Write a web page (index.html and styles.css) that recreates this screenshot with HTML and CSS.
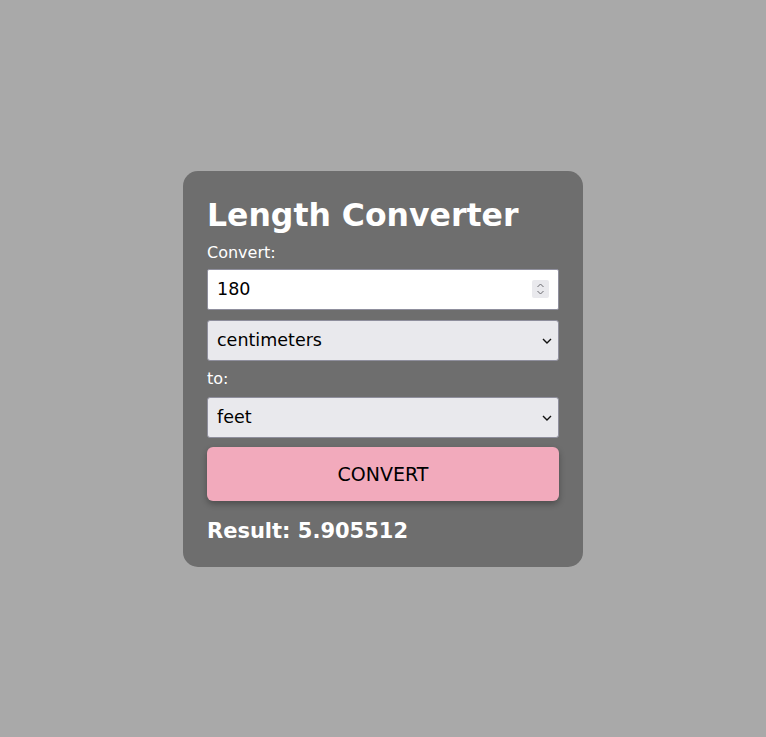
FILE: index.html
```html
<!DOCTYPE html>
<html>
<head>
<meta charset="utf-8">
<link rel="stylesheet" href="styles.css">
</head>
<body>
<div class="page">
  <div class="card">
    <h1 class="title">Length Converter</h1>
    <label class="label" for="val">Convert:</label>
    <div class="wrap wrap-input">
      <input class="field" id="val" type="number" value="180">
      <span class="spin">
        <svg width="17" height="18" viewBox="0 0 17 18"><path d="M5.5 7 L8.5 4 L11.5 7 M5.5 11 L8.5 14 L11.5 11" fill="none" stroke="#6a6a70" stroke-width="1"/></svg>
      </span>
    </div>
    <div class="wrap wrap-from">
      <select class="field select">
        <option>centimeters</option>
      </select>
      <svg class="chev" width="10" height="6" viewBox="0 0 10 6"><path d="M1 1 L5 5 L9 1" fill="none" stroke="#111" stroke-width="1.4"/></svg>
    </div>
    <label class="label label-to">to:</label>
    <div class="wrap wrap-to">
      <select class="field select">
        <option>feet</option>
      </select>
      <svg class="chev" width="10" height="6" viewBox="0 0 10 6"><path d="M1 1 L5 5 L9 1" fill="none" stroke="#111" stroke-width="1.4"/></svg>
    </div>
    <button class="btn">CONVERT</button>
    <div class="result">Result: 5.905512</div>
  </div>
</div>
</body>
</html>
```
FILE: styles.css
```css
html, body {
  margin: 0;
  padding: 0;
  height: 100%;
}
body {
  background: #a9a9a9;
  font-family: "DejaVu Sans", Verdana, sans-serif;
}
.page {
  height: 100%;
  display: flex;
  align-items: center;
  justify-content: center;
}
.card {
  width: 352px;
  background: #6e6e6e;
  border-radius: 15px;
  padding: 26px 24px 24px;
  display: flex;
  flex-direction: column;
  color: #fff;
}
.title {
  margin: 0 0 10px;
  font-size: 31.5px;
  font-weight: bold;
}
.label {
  font-size: 16px;
  margin-bottom: 7px;
}
.label-to {
  margin-bottom: 9px;
}
.wrap {
  position: relative;
}
.wrap-input {
  margin-bottom: 10px;
}
.wrap-from {
  margin-bottom: 8px;
}
.wrap-to {
  margin-bottom: 9px;
}
.field {
  display: block;
  box-sizing: border-box;
  width: 100%;
  height: 41px;
  font-family: "DejaVu Sans", Verdana, sans-serif;
  font-size: 17.5px;
  padding: 0 9px;
  border: 1px solid #8f8f9d;
  border-radius: 3px;
  margin: 0;
  color: #000;
  outline: none;
}
input.field {
  background: #fff;
  border-radius: 2px;
}
input.field::-webkit-inner-spin-button,
input.field::-webkit-outer-spin-button {
  -webkit-appearance: none;
  margin: 0;
}
.spin {
  position: absolute;
  right: 10px;
  top: 11px;
  width: 17px;
  height: 18px;
  background: #e9e9ed;
  border-radius: 2px;
  display: flex;
}
.select {
  -webkit-appearance: none;
  appearance: none;
  background: #e9e9ed;
  padding-left: 9px;
}
.chev {
  position: absolute;
  right: 7px;
  top: 18px;
  pointer-events: none;
}
.btn {
  height: 54px;
  margin-top: 0;
  border: none;
  border-radius: 6px;
  background: #f2aabc;
  font-family: "DejaVu Sans", Verdana, sans-serif;
  font-size: 19px;
  color: #000;
  box-shadow: 0 3px 6px rgba(0,0,0,0.3);
}
.result {
  margin-top: 18px;
  font-size: 21px;
  font-weight: bold;
}
```
